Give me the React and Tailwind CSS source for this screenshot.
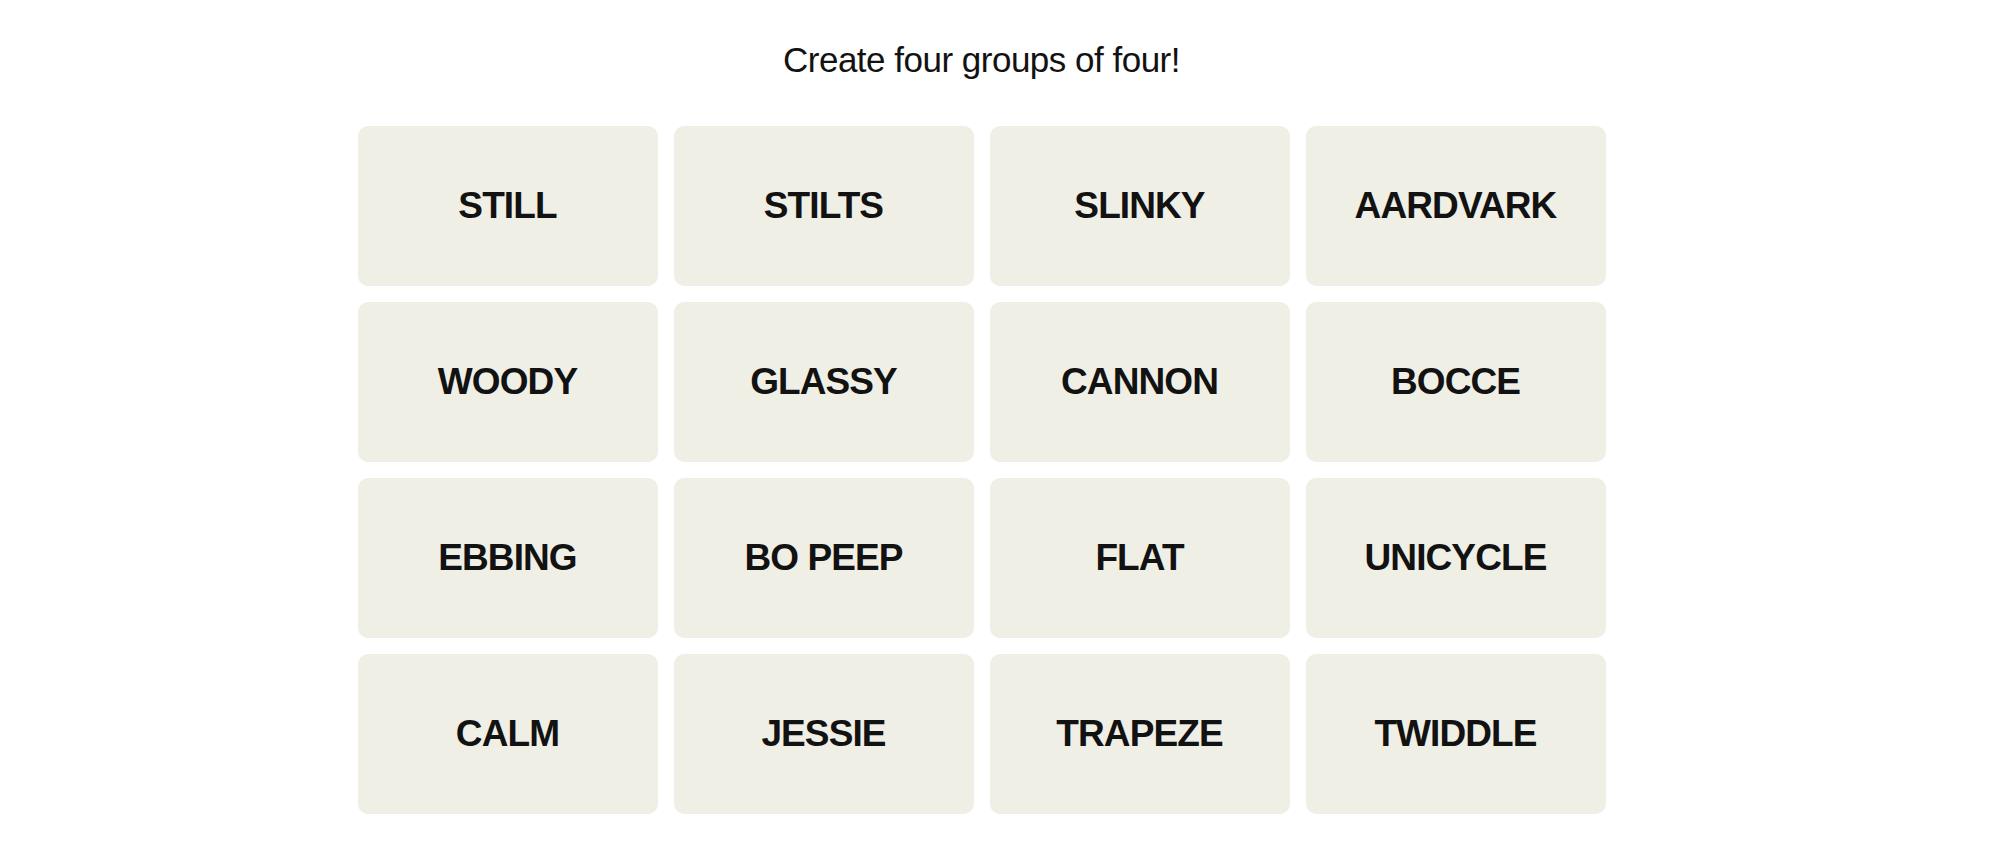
import React from 'react';

const WORDS = [
    'STILL', 'STILTS', 'SLINKY', 'AARDVARK',
    'WOODY', 'GLASSY', 'CANNON', 'BOCCE',
    'EBBING', 'BO PEEP', 'FLAT', 'UNICYCLE',
    'CALM', 'JESSIE', 'TRAPEZE', 'TWIDDLE',
];

function Tile({ word }) {
    return (
        <button className="flex h-[160px] w-[300px] items-center justify-center rounded-[10px] bg-[#efefe6] text-[37px] leading-none font-bold tracking-[-0.9px] text-[#121212]">
            {word}
        </button>
    );
}

export default function App() {
    return (
        <div className="flex min-h-[852px] w-full flex-col items-center bg-white pt-[40px] pr-[31px] font-['Liberation_Sans',Arial,sans-serif]">
            <h2 className="text-[35px] leading-[40px] font-normal tracking-[-0.5px] text-[#121212]">
                Create four groups of four!
            </h2>

            {/* 4x4 board */}
            <div className="mt-[45.5px] grid grid-cols-4 gap-x-[16px] gap-y-[16px]">
                {WORDS.map((w) => (
                    <Tile key={w} word={w} />
                ))}
            </div>
        </div>
    );
}
